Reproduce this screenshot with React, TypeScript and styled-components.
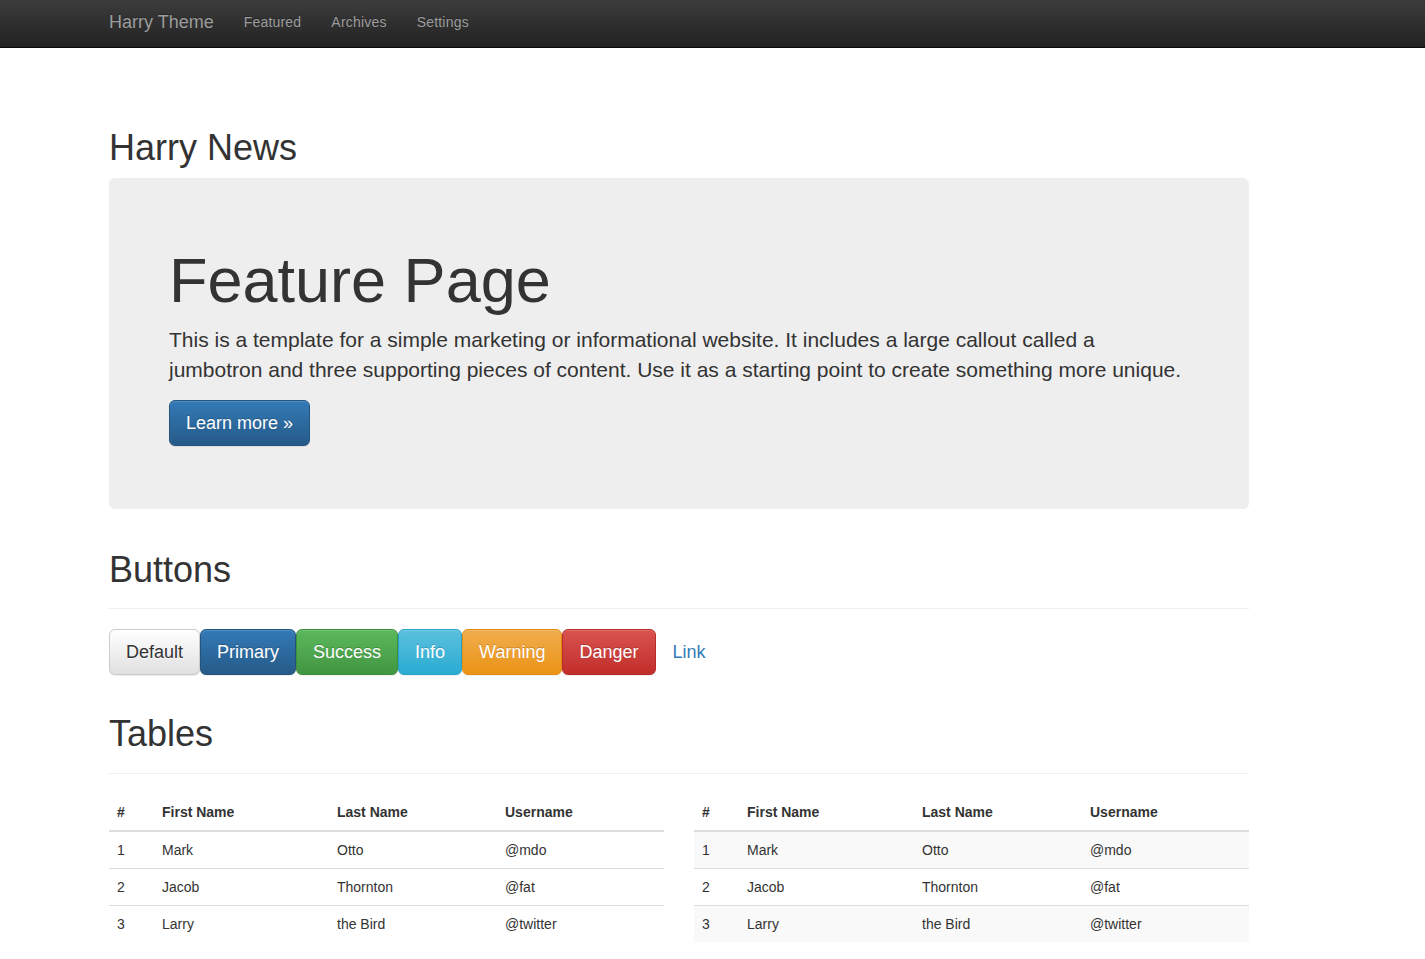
import styled, { createGlobalStyle, css } from 'styled-components'

const GlobalStyle = createGlobalStyle`
  html, body {
    margin: 0;
    padding: 0;
    background: #fff;
  }
  body {
    font-family: "Liberation Sans", Arial, Helvetica, sans-serif;
    font-size: 14px;
    line-height: 1.428571429;
    color: #333;
  }
  * { box-sizing: border-box; }
`

const Navbar = styled.nav`
  height: 48px;
  background-image: linear-gradient(to bottom, #3c3c3c 0, #222 100%);
  border-bottom: 1px solid #080808;
`

const NavInner = styled.div`
  display: flex;
  align-items: flex-start;
  padding-left: 109px;
  padding-top: 12px;
`

const Brand = styled.a`
  font-size: 18px;
  line-height: 20px;
  color: #9d9d9d;
  text-decoration: none;
  padding-right: 15px;
  text-shadow: 0 -1px 0 rgba(0, 0, 0, 0.25);
`

const NavLink = styled.a`
  font-size: 14px;
  line-height: 20px;
  letter-spacing: 0.2px;
  color: #9d9d9d;
  text-decoration: none;
  padding: 0 15px;
  text-shadow: 0 -1px 0 rgba(0, 0, 0, 0.25);
`

const Container = styled.main`
  width: 1249px;
  padding-left: 109px;
  padding-top: 80px;
`

const H1 = styled.h1`
  font-size: 36px;
  font-weight: 500;
  line-height: 1.1;
  margin: 0 0 10px;
  color: #333;
`

const Jumbotron = styled.div`
  background: #eee;
  border-radius: 6px;
  padding: 48px 60px;
  margin-bottom: 30px;
`

const JumboTitle = styled.h1`
  font-size: 63px;
  font-weight: 500;
  line-height: 1.1;
  margin: 20px 0 10px;
  color: #333;
`

const Lead = styled.p`
  font-size: 21px;
  font-weight: 200;
  line-height: 30px;
  margin: 0 0 15px;
`

const ButtonRow = styled.div`
  display: flex;
  align-items: flex-start;
`

type Variant = 'default' | 'primary' | 'success' | 'info' | 'warning' | 'danger' | 'link'

const VARIANTS: Record<Exclude<Variant, 'default' | 'link'>, [string, string, string]> = {
  primary: ['#337ab7', '#265a88', '#245580'],
  success: ['#5cb85c', '#419641', '#3e8f3e'],
  info: ['#5bc0de', '#2aabd2', '#28a4c9'],
  warning: ['#f0ad4e', '#eb9316', '#e38d13'],
  danger: ['#d9534f', '#c12e2a', '#b92c28'],
}

const Button = styled.button<{ $variant: Variant }>`
  display: inline-block;
  font-family: inherit;
  font-size: 18px;
  line-height: 24px;
  padding: 10px 16px;
  border-radius: 6px;
  border: 1px solid transparent;
  cursor: pointer;
  white-space: nowrap;

  ${({ $variant }) => {
    if ($variant === 'default') {
      return css`
        color: #333;
        background-image: linear-gradient(to bottom, #fff 0, #e0e0e0 100%);
        border-color: #ccc;
        text-shadow: 0 1px 0 #fff;
        box-shadow: inset 0 1px 0 rgba(255, 255, 255, 0.15), 0 1px 1px rgba(0, 0, 0, 0.075);
      `
    }
    if ($variant === 'link') {
      return css`
        color: #337ab7;
        background: transparent;
      `
    }
    const [from, to, border] = VARIANTS[$variant]
    return css`
      color: #fff;
      background-image: linear-gradient(to bottom, ${from} 0, ${to} 100%);
      border-color: ${border};
      text-shadow: 0 -1px 0 rgba(0, 0, 0, 0.2);
      box-shadow: inset 0 1px 0 rgba(255, 255, 255, 0.15), 0 1px 1px rgba(0, 0, 0, 0.075);
    `
  }}
`

const PageHeader = styled.div<{ $top?: number }>`
  margin: ${({ $top = 40 }) => $top}px 0 20px;
  padding-bottom: 9px;
  border-bottom: 1px solid #eee;

  ${H1} {
    margin-top: 0;
  }
`

const ButtonsBlock = styled.div`
  margin-bottom: 10px;
`

const TableGrid = styled.div`
  display: grid;
  grid-template-columns: 555px 555px;
  column-gap: 30px;
`

const Table = styled.table<{ $striped?: boolean }>`
  width: 100%;
  table-layout: fixed;
  border-collapse: collapse;
  border-spacing: 0;
  margin-bottom: 20px;

  th, td {
    padding: 8px;
    line-height: 20px;
    text-align: left;
    vertical-align: top;
  }

  th {
    font-weight: bold;
    border-bottom: 2px solid #ddd;
    vertical-align: bottom;
  }

  td {
    border-top: 1px solid #ddd;
  }

  ${({ $striped }) => $striped && css`
    tbody tr:nth-of-type(odd) {
      background-color: #f9f9f9;
    }
  `}
`

const ROWS = [
  ['1', 'Mark', 'Otto', '@mdo'],
  ['2', 'Jacob', 'Thornton', '@fat'],
  ['3', 'Larry', 'the Bird', '@twitter'],
]

const DataTable = ({ striped }: { striped?: boolean }) => (
  <Table $striped={striped}>
    <colgroup>
      <col style={{ width: 45 }} />
      <col style={{ width: 175 }} />
      <col style={{ width: 168 }} />
      <col />
    </colgroup>
    <thead>
      <tr>
        <th>#</th>
        <th>First Name</th>
        <th>Last Name</th>
        <th>Username</th>
      </tr>
    </thead>
    <tbody>
      {ROWS.map((row) => (
        <tr key={row[0]}>
          {row.map((cell, idx) => <td key={idx}>{cell}</td>)}
        </tr>
      ))}
    </tbody>
  </Table>
)

const BUTTONS: [Variant, string][] = [
  ['default', 'Default'],
  ['primary', 'Primary'],
  ['success', 'Success'],
  ['info', 'Info'],
  ['warning', 'Warning'],
  ['danger', 'Danger'],
  ['link', 'Link'],
]

export default function App() {
  return (
    <>
      <GlobalStyle />
      <Navbar>
        <NavInner>
          <Brand href="#">Harry Theme</Brand>
          <NavLink href="#">Featured</NavLink>
          <NavLink href="#">Archives</NavLink>
          <NavLink href="#">Settings</NavLink>
        </NavInner>
      </Navbar>

      <Container>
        <H1>Harry News</H1>

        <Jumbotron>
          <JumboTitle>Feature Page</JumboTitle>
          <Lead>
            This is a template for a simple marketing or informational website. It includes a large callout called a
            jumbotron and three supporting pieces of content. Use it as a starting point to create something more unique.
          </Lead>
          <Lead>
            <Button $variant="primary">Learn more &raquo;</Button>
          </Lead>
        </Jumbotron>

        <PageHeader $top={41}>
          <H1>Buttons</H1>
        </PageHeader>
        <ButtonsBlock>
          <ButtonRow>
            {BUTTONS.map(([variant, label]) => (
              <Button key={variant} $variant={variant}>{label}</Button>
            ))}
          </ButtonRow>
        </ButtonsBlock>

        <PageHeader $top={39}>
          <H1>Tables</H1>
        </PageHeader>
        <TableGrid>
          <DataTable />
          <DataTable striped />
        </TableGrid>
      </Container>
    </>
  )
}
